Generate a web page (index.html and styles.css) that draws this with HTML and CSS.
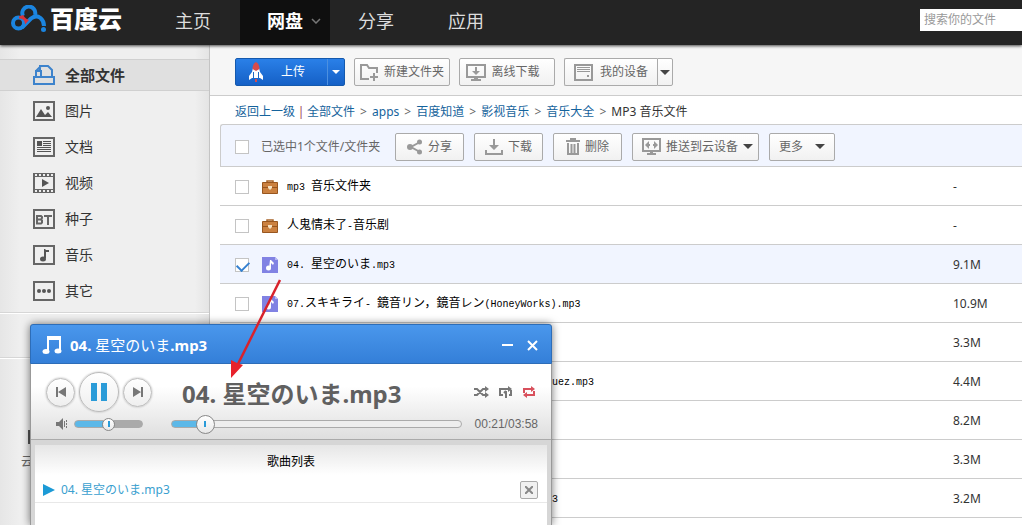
FILE: index.html
```html
<!DOCTYPE html>
<html lang="zh-CN">
<head>
<meta charset="utf-8">
<title>百度云 网盘</title>
<link rel="stylesheet" href="styles.css">
</head>
<body>
<header class="topbar">
  <a class="logo" href="#">
    <svg class="logo-mark" width="36" height="28" viewBox="0 0 36 28" fill="none" stroke="#1b85e0" stroke-width="4">
      <path d="M12 11a6.500 6.500 0 1 1 12-1"/>
      <circle cx="7.500" cy="18" r="5.500"/>
      <path d="M11 22.500 20 13.500Q25 9.500 29.500 13 33 16 33 21"/>
      <path d="M8 11.500l4-1.500c2 3 4 4.500 6 5l-4 4.500c0-4-2-6-6-6z" fill="#d9333c" stroke="none"/>
      <circle cx="32.500" cy="24.500" r="2.500" fill="#1b85e0" stroke="none"/>
    </svg>
    <span>百度云</span>
  </a>
  <nav class="tabs">
    <a href="#">主页</a>
    <a href="#" class="current">网盘
      <svg width="10" height="6" viewBox="0 0 10 6" fill="none" stroke="#777" stroke-width="1.500"><path d="m1 1 4 4 4-4"/></svg>
    </a>
    <a href="#">分享</a>
    <a href="#">应用</a>
  </nav>
  <input class="search" type="text" placeholder="搜索你的文件" aria-label="搜索你的文件">
</header>

<div class="body">
  <aside class="sidebar">
    <nav class="categories">
      <a href="#" class="current">
        <svg width="22" height="20" viewBox="0 0 22 20" fill="none" stroke="#3d83cc" stroke-width="2"><path d="M1 12h20v7H1zM3 12V6h5v6M7 6V1h8l4 4v7M3 6l5-5"/></svg>
        全部文件</a>
      <a href="#">
        <svg width="22" height="20" viewBox="0 0 22 20"><path fill="none" stroke="#666" stroke-width="2" d="M1 1h20v18H1z"/><path fill="#555" d="m3 16 5-8 4 6 3-3 4 5z"/><circle cx="15" cy="7" r="2" fill="#555"/></svg>
        图片</a>
      <a href="#">
        <svg width="22" height="20" viewBox="0 0 22 20"><path fill="none" stroke="#666" stroke-width="2" d="M1 1h20v18H1z"/><path fill="#555" d="M4 4h5v5H4zM10 4h8v1h-8zM10 6h8v1h-8zM10 8h8v1h-8zM4 10h14v1H4zM4 12h14v1H4zM4 14h14v1H4z"/></svg>
        文档</a>
      <a href="#">
        <svg width="22" height="20" viewBox="0 0 22 20"><path fill="#666" d="M0 0h22v20H0zM2 4v12h18V4z" fill-rule="evenodd"/><path stroke="#efefef" stroke-width="2" stroke-dasharray="2 2" d="M2 2h18M2 18h18"/><path fill="#555" d="m9 6 7 4-7 4z"/></svg>
        视频</a>
      <a href="#">
        <svg width="22" height="20" viewBox="0 0 22 20" fill="none" stroke="#666" stroke-width="2"><path d="M1 1h20v18H1z"/><path d="M4 6v9M3 7h5l1 1v1l-1 1.500H4h4l1 1v2l-1 1H3M11 7h8M15 7v9"/></svg>
        种子</a>
      <a href="#">
        <svg width="22" height="20" viewBox="0 0 22 20"><path fill="none" stroke="#666" stroke-width="2" d="M1 1h20v18H1z"/><path fill="#555" d="M11 4h1l1 1h3v2h-3v6h-2z"/><ellipse cx="10" cy="14" rx="3" ry="2.500" fill="#555"/></svg>
        音乐</a>
      <a href="#">
        <svg width="22" height="20" viewBox="0 0 22 20"><path fill="none" stroke="#666" stroke-width="2" d="M1 1h20v18H1z"/><g fill="#555"><circle cx="6" cy="10" r="2"/><circle cx="11" cy="10" r="2"/><circle cx="16" cy="10" r="2"/></g></svg>
        其它</a>
    </nav>
    <div class="side-gap"></div>
    <a class="cloud-app" href="#">
      <svg width="14" height="14" viewBox="0 0 14 14"><path fill="#555" d="M0 0h14v14H0z"/></svg>
      云
    </a>
  </aside>

  <main class="main">
    <div class="toolbar">
      <div class="split upload">
        <button type="button" class="upload-main">
          <svg width="16" height="21" viewBox="0 0 16 21"><path fill="#fff" d="M5 6h6l1 4 3 4v4l-3-2H4l-3 2v-4l3-4z"/><path fill="#d94b4b" d="M4.500 7q0-5 3.500-7 3.500 2 3.500 7L8 9z"/><path stroke="#2068c4" d="M5.500 10v6M10.500 10v6"/><path fill="#d94b4b" d="M7 17h2v3H7z"/></svg>
          上传</button>
        <button type="button" class="drop" aria-label="更多上传方式"><i class="caret"></i></button>
      </div>
      <button type="button" class="btn">
        <svg width="19" height="17" viewBox="0 0 19 17" fill="none" stroke="#999" stroke-width="2"><path d="M9 15H1V1h6l2 3h8v5"/><path d="M14 9v8M10 13h8"/></svg>
        新建文件夹</button>
      <button type="button" class="btn offline">
        <svg width="20" height="17" viewBox="0 0 20 17"><path fill="none" stroke="#999" stroke-width="2" d="M1 1h18v12H1z"/><path fill="#999" d="M9 3h2v4h3l-4 4-4-4h3zM8 13h4v2h3v2H5v-2h3z"/></svg>
        离线下载</button>
      <div class="split">
        <button type="button" class="btn">
          <svg width="19" height="17" viewBox="0 0 19 17"><path fill="none" stroke="#999" stroke-width="2" d="M1 1h17v15H1z"/><path fill="#999" d="M3 3h13v1H3zM3 5h13v1H3zM3 7h13v1H3zM13 11h2v2h-2z"/></svg>
          我的设备</button>
        <button type="button" class="drop" aria-label="选择设备"><i class="caret"></i></button>
      </div>
    </div>

    <nav class="crumbs">
      <a href="#">返回上一级</a><span class="bar">|</span><a href="#">全部文件</a><span>&gt;</span><a href="#">apps</a><span>&gt;</span><a href="#">百度知道</a><span>&gt;</span><a href="#">影视音乐</a><span>&gt;</span><a href="#">音乐大全</a><span>&gt;</span><b>MP3 音乐文件</b>
    </nav>

    <div class="files">
      <div class="selection">
        <label><input type="checkbox"> 已选中1个文件/文件夹</label>
        <button type="button" class="btn">
          <svg width="16" height="16" viewBox="0 0 16 16" fill="#999"><path fill="none" stroke="#999" stroke-width="2" d="m13 3-9 5 9 5"/><circle cx="12.500" cy="3" r="2.500"/><circle cx="3" cy="8" r="3"/><circle cx="12.500" cy="13" r="2.500"/></svg>
          分享</button>
        <button type="button" class="btn">
          <svg width="18" height="16" viewBox="0 0 18 16" fill="#999"><path d="M8 0h2v6h4l-5 5-5-5h4zM0 11h2v3h14v-3h2v5H0z"/></svg>
          下载</button>
        <button type="button" class="btn">
          <svg width="14" height="17" viewBox="0 0 14 17" fill="none" stroke="#999" stroke-width="2"><path d="M0 3h14M4 1h6M2 5v11h10V5M5.500 6v9M8.500 6v9"/></svg>
          删除</button>
        <button type="button" class="btn push">
          <svg width="19" height="17" viewBox="0 0 19 17"><path fill="none" stroke="#999" stroke-width="2" d="M1 1h17v12H1z"/><path fill="#999" d="m3 7 4-4v3h1v2H7v3zM16 7l-4-4v3h-1v2h1v3zM8 13h3v2h3v2H5v-2h3z"/></svg>
          推送到云设备<i class="caret"></i></button>
        <button type="button" class="btn more">更多<i class="caret"></i></button>
      </div>

      <table class="list">
        <tbody>
          <tr>
            <td class="pick"><input type="checkbox" aria-label="mp3 音乐文件夹"></td>
            <td class="kind"><svg width="16" height="14" viewBox="0 0 16 14"><path fill="none" stroke="#a8642a" stroke-width="1.500" d="M5 3V1h6v2"/><path fill="#cb8140" stroke="#98561f" d="M.5 2.500h15v11H.5z"/><path stroke="#98561f" d="M0 7.500h16"/><path fill="#f6e3c4" d="M6 6h4v2L8 10 6 8z"/></svg></td>
            <td><span class="latin">mp3 </span>音乐文件夹</td>
            <td class="size">-</td>
          </tr>
          <tr>
            <td class="pick"><input type="checkbox" aria-label="人鬼情未了-音乐剧"></td>
            <td class="kind"><svg width="16" height="14" viewBox="0 0 16 14"><path fill="none" stroke="#a8642a" stroke-width="1.500" d="M5 3V1h6v2"/><path fill="#cb8140" stroke="#98561f" d="M.5 2.500h15v11H.5z"/><path stroke="#98561f" d="M0 7.500h16"/><path fill="#f6e3c4" d="M6 6h4v2L8 10 6 8z"/></svg></td>
            <td>人鬼情未了<span class="latin">-</span>音乐剧</td>
            <td class="size">-</td>
          </tr>
          <tr class="selected">
            <td class="pick"><input type="checkbox" checked aria-label="04. 星空のいま.mp3"></td>
            <td class="kind"><svg width="16" height="16" viewBox="0 0 16 16"><path fill="#8182e3" d="M0 0h13l3 3v13H0z"/><path fill="#b7b8f2" d="M13 0v3h3z"/><path fill="#fff" d="M8 3h1l3 3-1 2-2-2v5H7z"/><circle cx="6.500" cy="11" r="2.500" fill="#fff"/></svg></td>
            <td><span class="latin">04. </span>星空のいま<span class="latin">.mp3</span></td>
            <td class="size">9.1M</td>
          </tr>
          <tr>
            <td class="pick"><input type="checkbox" aria-label="07.スキキライ"></td>
            <td class="kind"><svg width="16" height="16" viewBox="0 0 16 16"><path fill="#8182e3" d="M0 0h13l3 3v13H0z"/><path fill="#b7b8f2" d="M13 0v3h3z"/><path fill="#fff" d="M8 3h1l3 3-1 2-2-2v5H7z"/><circle cx="6.500" cy="11" r="2.500" fill="#fff"/></svg></td>
            <td><span class="latin">07.</span>スキキライ<span class="latin">- </span>鏡音リン，鏡音レン<span class="latin">(HoneyWorks).mp3</span></td>
            <td class="size">10.9M</td>
          </tr>
          <tr><td></td><td></td><td></td><td class="size">3.3M</td></tr>
          <tr><td></td><td></td><td class="tail"><span class="latin">uez.mp3</span></td><td class="size">4.4M</td></tr>
          <tr><td></td><td></td><td></td><td class="size">8.2M</td></tr>
          <tr><td></td><td></td><td></td><td class="size">3.3M</td></tr>
          <tr><td></td><td></td><td class="tail"><span class="latin">3</span></td><td class="size">3.2M</td></tr>
        </tbody>
      </table>
    </div>
  </main>
</div>

<section class="player">
  <header class="player-head">
    <svg width="20" height="20" viewBox="0 0 20 20"><path fill="#fff" d="M5 1h14v14h-2V5H7v11H5z"/><ellipse cx="4" cy="16.500" rx="3.500" ry="2.500" fill="#fff"/><ellipse cx="16" cy="16" rx="3.500" ry="2.500" fill="#fff"/></svg>
    <h1>04. <span>星空のいま</span>.mp3</h1>
    <button type="button" aria-label="最小化"><svg width="12" height="12" viewBox="0 0 12 12"><path stroke="#fff" stroke-width="2" d="M0 6h11"/></svg></button>
    <button type="button" aria-label="关闭"><svg width="12" height="12" viewBox="0 0 12 12"><path stroke="#fff" stroke-width="2" d="m1 2 9 9m0-9-9 9"/></svg></button>
  </header>
  <div class="deck">
    <div class="left">
      <div class="transport">
        <button type="button" class="round" aria-label="上一首"><svg width="12" height="10" viewBox="0 0 12 10" fill="#777"><path d="M1 0h2v10H1zM11 0v10L3 5z"/></svg></button>
        <button type="button" class="round big" aria-label="暂停"><svg width="18" height="18" viewBox="0 0 18 18" fill="#2a9bd8"><path d="M1 0h6v18H1zM11 0h6v18h-6z"/></svg></button>
        <button type="button" class="round" aria-label="下一首"><svg width="12" height="10" viewBox="0 0 12 10" fill="#777"><path d="M9 0h2v10H9zM1 0v10l8-5z"/></svg></button>
      </div>
      <div class="volume">
        <svg width="11" height="12" viewBox="0 0 11 12" fill="#777"><path d="M0 4h3l4-4v12L3 8H0zM8 3h1v6H8zM10 2h1v2h-1zM10 5h1v2h-1zM10 8h1v2h-1z"/></svg>
        <input type="range" min="0" max="100" value="50" aria-label="音量">
      </div>
    </div>
    <div class="right">
      <div class="now">
        <h2>04. 星空のいま.mp3</h2>
        <button type="button" aria-label="随机播放"><svg width="16" height="12" viewBox="0 0 16 12"><path fill="none" stroke="#777" stroke-width="2" d="M0 3h3l6 6h3M0 9h3l6-6h3"/><path fill="#777" d="m11 0 4 3-4 3zM11 6l4 3-4 3z"/></svg></button>
        <button type="button" aria-label="单曲循环"><svg width="14" height="12" viewBox="0 0 14 12"><path fill="none" stroke="#777" stroke-width="2" d="M4 9H1V3h9M10 9h2V4M7 5v7M5 7l2-2"/><path fill="#777" d="m9 0 4 3-4 3z"/></svg></button>
        <button type="button" aria-label="列表循环"><svg width="14" height="12" viewBox="0 0 14 12"><path fill="none" stroke="#d8505c" stroke-width="2" d="M2 7V3h8M12 5v4H4"/><path fill="#d8505c" d="m9 0 4 3-4 3zM5 6 1 9l4 3z"/></svg></button>
      </div>
      <div class="progress">
        <input type="range" min="0" max="238" value="21" aria-label="播放进度">
        <span>00:21/03:58</span>
      </div>
    </div>
  </div>
  <div class="playlist">
    <h3>歌曲列表</h3>
    <div class="song">
      <svg width="12" height="12" viewBox="0 0 12 12"><path fill="#1c9ad6" d="m0 0 12 6-12 6z"/></svg>
      <a href="#">04. 星空のいま.mp3</a>
      <button type="button" aria-label="移除"><svg width="8" height="8" viewBox="0 0 8 8"><path stroke="#888" stroke-width="2" d="m0 0 8 8m0-8L0 8"/></svg></button>
    </div>
  </div>
</section>

<svg class="pointer" width="56" height="104" viewBox="0 0 56 104"><path stroke="#d8222c" stroke-width="2.500" d="M52 3 10 87"/><path fill="#e8222c" d="m3 101 0-18 6 3 6 2z"/></svg>
</body>
</html>
```

FILE: styles.css
```css
* { box-sizing: border-box; }
body {
  margin: 0;
  height: 100vh;
  display: flex;
  flex-direction: column;
  overflow: hidden;
  position: relative;
  background: #fff;
  color: #333;
  font: 12px/18px "Noto Sans", "Noto Sans CJK SC", sans-serif;
}
a { color: inherit; text-decoration: none; }
button, input { font: inherit; color: inherit; margin: 0; }
button { padding: 0; border: 0; background: none; display: flex; align-items: center; justify-content: center; }
svg { display: block; flex: none; }
h1, h2, h3 { margin: 0; }

.topbar {
  flex: none;
  height: 45px;
  display: flex;
  align-items: center;
  background: #242424;
  box-shadow: 0 1px 3px #444;
  z-index: 1;
}
.logo { width: 150px; padding: 0 0 8px 11px; display: flex; align-items: center; gap: 3px; color: #fff; font-size: 24px; line-height: 28px; font-weight: 900; white-space: nowrap; }
.tabs { flex: 1; display: flex; align-self: stretch; color: #ddd; font-size: 18px; }
.tabs a { width: 90px; padding: 0 0 4px 28px; display: flex; align-items: center; gap: 8px; white-space: nowrap; }
.tabs a:first-child { padding-left: 25px; }
.tabs .current { padding-left: 27px; background: #0f0f0f; color: #fff; font-weight: 700; }
.search { width: 102px; height: 22px; margin-bottom: 5px; padding: 0 4px 2px; border: 0; border-radius: 0; background: #fff; }
.search::placeholder { color: #999; opacity: 1; }

.body { flex: 1; min-height: 0; display: flex; }
.sidebar {
  flex: none;
  width: 210px;
  padding-top: 12px;
  border-right: 1px solid #c4c4c4;
  background: linear-gradient(90deg, #e6e6e6, #efefef 20px, #efefef 195px, #e4e4e4);
}
.categories { display: flex; flex-direction: column; padding-bottom: 3px; font-size: 14px; }
.categories a { height: 36px; padding-left: 33px; display: flex; align-items: center; gap: 10px; }
.categories .current { height: 32px; margin: 2px 0; border: solid #d0d0d0; border-width: 1px 0; background: #e0e0e0; font-size: 15px; font-weight: 700; }
.side-gap { height: 46px; border: solid #d6d6d6; border-width: 1px 0; box-shadow: inset 0 1px #fff, 0 1px #fff; }
.cloud-app { display: flex; flex-direction: column; gap: 9px; padding: 72px 0 0 21px; color: #666; }
.cloud-app svg { margin-left: 7px; }

.main { flex: 1; min-width: 0; }
.toolbar { height: 51px; padding: 13px 0 0 25px; display: flex; gap: 9px; align-items: flex-start; background: #f6f6f6; border-bottom: 1px solid #ccc; }
.btn {
  height: 28px;
  padding: 0 5px;
  gap: 5px;
  border: 1px solid #aaa;
  border-radius: 2px;
  background: linear-gradient(#fff, #f1f1f1);
  color: #666;
  white-space: nowrap;
}
.toolbar .btn { min-width: 96px; }
.toolbar .offline { gap: 6px; padding-right: 14px; }
.split { display: flex; }
.toolbar .split .btn { min-width: 93px; gap: 7px; border-radius: 2px 0 0 2px; border-right: 0; }
.drop { width: 16px; height: 28px; border: 1px solid #aaa; border-radius: 0 2px 2px 0; background: linear-gradient(#fff, #f1f1f1); color: #444; }
.caret { border: solid transparent; border-width: 5px 5px 0; border-top-color: #444; }
.upload { border: 1px solid #1459ad; border-radius: 2px; background: linear-gradient(#2a80e8, #1560c6); color: #fff; }
.upload-main { width: 91px; height: 26px; padding-left: 12px; justify-content: flex-start; gap: 17px; }
.upload .drop { width: 17px; height: 26px; border: 0; border-left: 1px solid #4c90e0; background: none; }
.upload .caret { border-width: 4px 4px 0; border-top-color: #fff; }

.crumbs { height: 28px; padding: 3px 0 0 25px; display: flex; align-items: center; color: #666; white-space: nowrap; }
.crumbs a { color: #15639c; }
.crumbs span { width: 17px; text-align: center; }
.crumbs .bar { width: 12px; color: #945; }
.crumbs b { font-weight: 400; color: #333; }

.files { margin-left: 10px; }
.selection { height: 43px; padding: 2px 0 0 14px; display: flex; align-items: center; gap: 10px; border: solid #ccc; border-width: 1px 0 1px 1px; border-radius: 3px 0 0; background: #f1f5ff; }
.selection label { width: 150px; display: flex; align-items: center; gap: 12px; color: #666; white-space: nowrap; }
.selection .btn { min-width: 69px; }
.selection .push { padding-left: 9px; }
.selection .more { min-width: 66px; }
.selection .more .caret { margin-left: 7px; }
input[type="checkbox"] { appearance: none; flex: none; display: block; width: 14px; height: 14px; border: 1px solid #c4c4c4; background: #fff; }
input[type="checkbox"]:checked::after { content: ""; display: block; width: 10px; height: 6px; margin: 2px 0 0 1px; border: solid #3580d0; border-width: 0 0 2px 2px; transform: rotate(-45deg); }

.list { width: 100%; table-layout: fixed; border-spacing: 0; color: #000; font-family: "Noto Sans CJK SC", sans-serif; }
.list td { height: 39px; padding: 1px 0 0; border-bottom: 1px solid #ccc; white-space: nowrap; }
.list .selected { background: #f1f5ff; }
.list td:first-child { width: 42px; padding-left: 15px; }
.list td:nth-child(2) { width: 25px; }
.list td:last-child { width: 69px; }
.list .size { font-family: "Noto Sans", sans-serif; color: #333; }
.latin { font-family: "Liberation Mono", monospace; font-size: 10px; white-space: pre; }
.list .tail { padding-left: 265px; }

.player {
  position: absolute;
  z-index: 2;
  left: 30px;
  top: 324px;
  bottom: 0;
  width: 522px;
  display: flex;
  flex-direction: column;
  border: solid #999;
  border-width: 0 1px;
  border-radius: 4px 4px 0 0;
  background: #d6d6d6;
  box-shadow: 0 0 8px rgba(0, 0, 0, .55);
}
.player-head { height: 40px; margin: 0 -1px; padding: 2px 12px 0 11px; display: flex; align-items: center; gap: 13px; border: 1px solid #2d6db8; border-radius: 3px 3px 0 0; background: linear-gradient(#4a97ec, #347fd8); color: #fff; }
.player-head h1 { flex: 1; margin-left: -5px; font-size: 15px; line-height: 20px; }
.player-head h1 span { font-weight: 400; }
.deck { height: 76px; padding: 8px 13px 0 15px; display: flex; gap: 19px; background: linear-gradient(#fff 30%, #dedede); border-bottom: 1px solid #aaa; }
.left { width: 106px; }
.transport { display: flex; align-items: center; justify-content: space-between; }
.round { width: 29px; height: 29px; border: 1px solid #bbb; border-radius: 50%; background: linear-gradient(#fff, #eee); box-shadow: 0 0 2px #aaa; }
.big { width: 40px; height: 40px; }
.volume { height: 24px; padding-left: 10px; display: flex; align-items: center; gap: 7px; }
.volume input { width: 69px; --thumb: 13px; --mark: 1px; --fill: 50%; --rest: #aaa; }
.right { flex: 1; min-width: 0; }
.now { height: 40px; padding: 0 2px 0 11px; display: flex; align-items: center; gap: 9px; }
.now h2 { flex: 1; padding-top: 4px; font-size: 24px; line-height: 36px; color: #606060; white-space: nowrap; }
.progress { height: 24px; display: flex; align-items: center; gap: 13px; color: #666; font-family: "Liberation Sans", sans-serif; }
.progress input { flex: 1; min-width: 0; --thumb: 19px; --mark: 2px; --fill: 10%; --rest: #eee; }
input[type="range"] { appearance: none; display: block; height: 19px; background: none; }
input[type="range"]::-webkit-slider-runnable-track { height: 8px; border: 1px solid #aaa; border-radius: 4px; background: linear-gradient(90deg, #5cb8e8 var(--fill), var(--rest) var(--fill)); }
input[type="range"]::-webkit-slider-thumb { appearance: none; width: var(--thumb); height: var(--thumb); margin-top: calc(3px - var(--thumb) / 2); border: 1px solid #888; border-radius: 50%; background: linear-gradient(#2a9bd8, #2a9bd8) center / 2px 6px no-repeat, linear-gradient(#fff, #e8e8e8); }
.playlist { flex: 1; margin: 5px 4px 0; background: linear-gradient(#e6e6e6, #fff 30px); }
.playlist h3 { height: 32px; text-align: center; color: #000; font-size: 12px; line-height: 34px; font-weight: 400; }
.song { height: 26px; padding: 0 9px 0 8px; display: flex; align-items: center; gap: 6px; border-bottom: 1px solid #e8e8e8; color: #3aa0cf; }
.song a { flex: 1; }
.song button { width: 18px; height: 18px; border: 1px solid #aaa; border-radius: 2px; background: #f1f1f1; }

.pointer { position: absolute; z-index: 3; left: 228px; top: 277px; }
```
